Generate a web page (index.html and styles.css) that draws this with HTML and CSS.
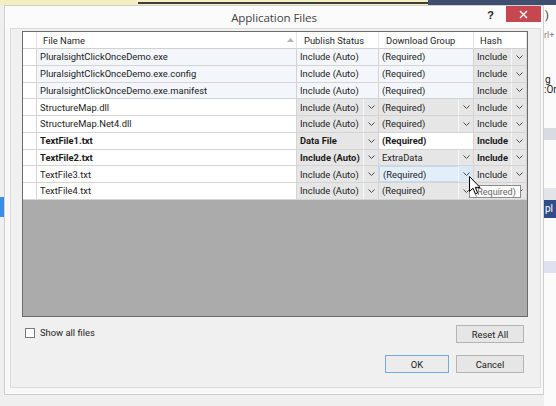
FILE: index.html
```html
<!DOCTYPE html>
<html>
<head>
<meta charset="utf-8">
<link rel="stylesheet" href="styles.css">
</head>
<body>
<div class="desk">
  <div class="topstrip">
    <div class="ts-yellow"><div class="ts-line"></div></div>
    <div class="ts-navy"></div>
  </div>
  <div class="leftblue"></div>
  <div class="bg-right">
    <span class="bgt bgt1">)</span>
    <span class="bgt bgt2">rl+</span>
    <span class="bgt bgt3">g</span>
    <span class="bgt bgt4">:On</span>
    <div class="band band1"></div>
    <div class="band band2"></div>
    <div class="band band3"><span>pl</span></div>
    <div class="band band4"></div>
  </div>

  <div class="dialog">
    <div class="titlebar">
      <div></div>
      <div class="title">Application Files</div>
      <div class="tb-right">
        <span class="help">?</span>
        <span class="close"><svg width="9" height="9" viewBox="0 0 9 9"><path d="M1 1 L8 8 M8 1 L1 8" stroke="#fff" stroke-width="1.4"/></svg></span>
      </div>
    </div>
    <div class="client">
      <div class="grid">
        <div class="rows">
          <!-- header -->
          <div class="c h"></div>
          <div class="c h hname"><span>File Name</span><svg class="sort" width="7" height="4" viewBox="0 0 7 4"><path d="M0 4 L3.5 0 L7 4 Z" fill="#b4b4b4"/></svg></div>
          <div class="c h hp">Publish Status</div>
          <div class="c h hp">Download Group</div>
          <div class="c h hp hh">Hash</div>

          <!-- row 1 -->
          <div class="c rh"></div>
          <div class="c t fn">PluralsightClickOnceDemo.exe</div>
          <div class="c t pl">Include (Auto)</div>
          <div class="c t pl">(Required)</div>
          <div class="c combo"><span class="v">Include</span><span class="dd"><svg width="7" height="4" viewBox="0 0 7 4"><path d="M0.5 0.5 L3.5 3.5 L6.5 0.5" fill="none" stroke="#4a4a4a"/></svg></span></div>

          <!-- row 2 -->
          <div class="c rh"></div>
          <div class="c t fn">PluralsightClickOnceDemo.exe.config</div>
          <div class="c t pl">Include (Auto)</div>
          <div class="c t pl">(Required)</div>
          <div class="c combo"><span class="v">Include</span><span class="dd"><svg width="7" height="4" viewBox="0 0 7 4"><path d="M0.5 0.5 L3.5 3.5 L6.5 0.5" fill="none" stroke="#4a4a4a"/></svg></span></div>

          <!-- row 3 -->
          <div class="c rh"></div>
          <div class="c t fn">PluralsightClickOnceDemo.exe.manifest</div>
          <div class="c t pl">Include (Auto)</div>
          <div class="c t pl">(Required)</div>
          <div class="c combo"><span class="v">Include</span><span class="dd"><svg width="7" height="4" viewBox="0 0 7 4"><path d="M0.5 0.5 L3.5 3.5 L6.5 0.5" fill="none" stroke="#4a4a4a"/></svg></span></div>

          <!-- row 4 -->
          <div class="c rh"></div>
          <div class="c fn">StructureMap.dll</div>
          <div class="c combo"><span class="v">Include (Auto)</span><span class="dd"><svg width="7" height="4" viewBox="0 0 7 4"><path d="M0.5 0.5 L3.5 3.5 L6.5 0.5" fill="none" stroke="#4a4a4a"/></svg></span></div>
          <div class="c combo"><span class="v">(Required)</span><span class="dd"><svg width="7" height="4" viewBox="0 0 7 4"><path d="M0.5 0.5 L3.5 3.5 L6.5 0.5" fill="none" stroke="#4a4a4a"/></svg></span></div>
          <div class="c combo"><span class="v">Include</span><span class="dd"><svg width="7" height="4" viewBox="0 0 7 4"><path d="M0.5 0.5 L3.5 3.5 L6.5 0.5" fill="none" stroke="#4a4a4a"/></svg></span></div>

          <!-- row 5 -->
          <div class="c rh"></div>
          <div class="c fn">StructureMap.Net4.dll</div>
          <div class="c combo"><span class="v">Include (Auto)</span><span class="dd"><svg width="7" height="4" viewBox="0 0 7 4"><path d="M0.5 0.5 L3.5 3.5 L6.5 0.5" fill="none" stroke="#4a4a4a"/></svg></span></div>
          <div class="c combo"><span class="v">(Required)</span><span class="dd"><svg width="7" height="4" viewBox="0 0 7 4"><path d="M0.5 0.5 L3.5 3.5 L6.5 0.5" fill="none" stroke="#4a4a4a"/></svg></span></div>
          <div class="c combo"><span class="v">Include</span><span class="dd"><svg width="7" height="4" viewBox="0 0 7 4"><path d="M0.5 0.5 L3.5 3.5 L6.5 0.5" fill="none" stroke="#4a4a4a"/></svg></span></div>

          <!-- row 6 -->
          <div class="c rh"></div>
          <div class="c fn b">TextFile1.txt</div>
          <div class="c combo b"><span class="v">Data File</span><span class="dd"><svg width="7" height="4" viewBox="0 0 7 4"><path d="M0.5 0.5 L3.5 3.5 L6.5 0.5" fill="none" stroke="#4a4a4a"/></svg></span></div>
          <div class="c pl b">(Required)</div>
          <div class="c combo b"><span class="v">Include</span><span class="dd"><svg width="7" height="4" viewBox="0 0 7 4"><path d="M0.5 0.5 L3.5 3.5 L6.5 0.5" fill="none" stroke="#4a4a4a"/></svg></span></div>

          <!-- row 7 -->
          <div class="c rh"></div>
          <div class="c fn b">TextFile2.txt</div>
          <div class="c combo b"><span class="v">Include (Auto)</span><span class="dd"><svg width="7" height="4" viewBox="0 0 7 4"><path d="M0.5 0.5 L3.5 3.5 L6.5 0.5" fill="none" stroke="#4a4a4a"/></svg></span></div>
          <div class="c combo"><span class="v">ExtraData</span><span class="dd"><svg width="7" height="4" viewBox="0 0 7 4"><path d="M0.5 0.5 L3.5 3.5 L6.5 0.5" fill="none" stroke="#4a4a4a"/></svg></span></div>
          <div class="c combo b"><span class="v">Include</span><span class="dd"><svg width="7" height="4" viewBox="0 0 7 4"><path d="M0.5 0.5 L3.5 3.5 L6.5 0.5" fill="none" stroke="#4a4a4a"/></svg></span></div>

          <!-- row 8 -->
          <div class="c rh"></div>
          <div class="c fn">TextFile3.txt</div>
          <div class="c combo"><span class="v">Include (Auto)</span><span class="dd"><svg width="7" height="4" viewBox="0 0 7 4"><path d="M0.5 0.5 L3.5 3.5 L6.5 0.5" fill="none" stroke="#4a4a4a"/></svg></span></div>
          <div class="c combo hov"><span class="v">(Required)</span><span class="dd"><svg width="7" height="4" viewBox="0 0 7 4"><path d="M0.5 0.5 L3.5 3.5 L6.5 0.5" fill="none" stroke="#4a4a4a"/></svg></span></div>
          <div class="c combo"><span class="v">Include</span><span class="dd"><svg width="7" height="4" viewBox="0 0 7 4"><path d="M0.5 0.5 L3.5 3.5 L6.5 0.5" fill="none" stroke="#4a4a4a"/></svg></span></div>

          <!-- row 9 -->
          <div class="c rh"></div>
          <div class="c fn">TextFile4.txt</div>
          <div class="c combo"><span class="v">Include (Auto)</span><span class="dd"><svg width="7" height="4" viewBox="0 0 7 4"><path d="M0.5 0.5 L3.5 3.5 L6.5 0.5" fill="none" stroke="#4a4a4a"/></svg></span></div>
          <div class="c combo"><span class="v">(Required)</span><span class="dd"><svg width="7" height="4" viewBox="0 0 7 4"><path d="M0.5 0.5 L3.5 3.5 L6.5 0.5" fill="none" stroke="#4a4a4a"/></svg></span></div>
          <div class="c combo"><span class="v">Include</span><span class="dd"><svg width="7" height="4" viewBox="0 0 7 4"><path d="M0.5 0.5 L3.5 3.5 L6.5 0.5" fill="none" stroke="#4a4a4a"/></svg></span></div>
        </div>
      </div>

      <div class="opts">
        <label class="chk"><span class="box"></span><span>Show all files</span></label>
        <button class="btn">Reset All</button>
      </div>
      <div class="btns">
        <button class="btn ok">OK</button>
        <button class="btn">Cancel</button>
      </div>
    </div>
  </div>

  <div class="tooltip">(Required)</div>
  <svg class="cursor" width="12" height="19" viewBox="0 0 12 19"><path d="M0.5 0.5 L0.5 15.5 L4 12.2 L6.4 17.8 L8.6 16.9 L6.3 11.4 L11 11.4 Z" fill="#fff" stroke="#000" stroke-width="1" stroke-linejoin="round"/></svg>
</div>
</body>
</html>
```

FILE: styles.css
```css
* { box-sizing: border-box; }
html, body { margin: 0; padding: 0; }
body {
  width: 556px;
  height: 406px;
  overflow: hidden;
  background: #ececec;
  font-family: Roboto, "Liberation Sans", sans-serif;
  font-size: 9.4px;
  color: #1b1b1b;
}
.desk { position: relative; width: 556px; height: 406px; overflow: hidden; background: #efefef; }

.topstrip { display: flex; height: 5px; }
.ts-yellow { width: 428px; background: #f4efc1; position: relative; }
.ts-line { position: absolute; left: 138px; right: 0; top: 2px; height: 2px; background: #3e3e3e; }
.ts-navy { flex: 1; background: #3f4d6e; }

.leftblue { position: absolute; left: 0; top: 197px; width: 4px; height: 20px; background: #3a8de6; }

.bg-right { position: absolute; left: 544px; top: 5px; width: 12px; height: 401px; background: #fbfbfb; }
.bgt { position: absolute; font-size: 9px; color: #333; white-space: nowrap; }
.bgt1 { left: 1px; top: 4px; font-size: 11px; }
.bgt2 { left: 0; top: 25px; color: #888; }
.bgt3 { left: 1px; top: 69px; font-size: 10px; color: #222; }
.bgt4 { left: 0; top: 79px; font-size: 10px; color: #222; }
.band { position: absolute; left: 0; width: 12px; }
.band1 { top: 123px; height: 12px; background: #d9dbe3; }
.band2 { top: 183px; height: 12px; background: #e2e4ea; }
.band3 { top: 195px; height: 18px; background: #2f4d86; }
.band3 span { position: absolute; left: 1px; top: 3px; color: #fff; font-size: 10px; }
.band4 { top: 256px; height: 12px; background: #dfe1f0; }

.dialog {
  position: absolute;
  left: 4px; top: 5px;
  width: 540px; height: 390px;
  border: 1px solid #cfcfcf;
  background: #f8f8f8;
  display: flex;
  flex-direction: column;
}
.titlebar {
  height: 22px;
  display: grid;
  grid-template-columns: 1fr auto 1fr;
  align-items: start;
  background: #fbfbfb;
}
.title {
  font-family: "Open Sans", "Noto Sans", sans-serif;
  font-size: 11.6px;
  color: #444;
  padding-top: 4px;
  letter-spacing: -0.1px;
}
.tb-right { display: flex; justify-content: flex-end; align-items: flex-start; }
.help { font-weight: bold; font-size: 11px; color: #222; margin-top: 3px; margin-right: 12px; font-family: "Liberation Sans", sans-serif; }
.close {
  width: 35px; height: 16px;
  background: #c5474f;
  display: flex; align-items: center; justify-content: center;
  margin-right: 2px;
}

.client {
  flex: 1;
  margin: 0 2px 6px 5px;
  border: 1px solid #dcdcdc;
  background: #f0f0f0;
  padding: 2px 12px 0 11px;
  display: flex;
  flex-direction: column;
}

.grid {
  width: 506px;
  height: 286px;
  border: 1px solid #6b6b6b;
  background: #ababab;
}
.rows {
  display: grid;
  grid-template-columns: 14px 260px 82px 95px 53px;
  grid-template-rows: 17px repeat(9, 16.75px);
  background: #fff;
}
.c {
  border-right: 1px solid #d4d4d4;
  border-bottom: 1px solid #d4d4d4;
  white-space: nowrap;
  overflow: hidden;
  display: flex;
  align-items: center;
  background: #fff;
}
.h { background: #fff; color: #1e1e1e; border-right-color: #e4e4e4; border-bottom-color: #d0d0d0; }
.hname { padding-left: 6px; position: relative; }
.hname span { flex: 1; }
.sort { margin-right: 2px; margin-top: -1px; }
.hp { padding-left: 7px; }
.hh { padding-left: 6px; }
.rh { background: #fff; }
.fn { padding-left: 3px; }
.t { background: #f3f6fb; }
.pl { padding-left: 3px; }
.b { font-weight: bold; }

.combo { background: #e6e6e6; padding: 0; align-items: stretch; }
.combo .v { flex: 1; padding-left: 3px; display: flex; align-items: center; border-right: 1px solid #f7f7f7; }
.combo .dd { width: 14px; display: flex; align-items: center; justify-content: center; }
.combo.hov { background: #e3eefb; }
.combo.hov .v { border: 1px solid #c5daf1; border-right-color: #f2f7fd; }
.combo.hov .dd { background: #dde8f5; }

.opts {
  margin-top: 8px;
  display: flex;
  justify-content: space-between;
  align-items: flex-start;
  padding: 0 4px 0 3px;
}
.chk { display: flex; align-items: center; gap: 5px; margin-top: 2px; color: #222; }
.box { width: 10px; height: 10px; border: 1px solid #7a7a7a; background: #fff; }

.btn {
  font-family: Roboto, "Liberation Sans", sans-serif;
  font-size: 9.4px;
  color: #1b1b1b;
  width: 68px; height: 18px;
  border: 1px solid #b4b4b4;
  background: #e6e6e6;
  padding: 0;
}
.btns {
  margin-top: 12px;
  display: flex;
  justify-content: flex-end;
  gap: 7px;
  padding-right: 4px;
}
.ok { width: 64px; border-color: #78a9d9; background: #ececec; }

.tooltip {
  position: absolute;
  left: 469px; top: 185px;
  width: 52px; height: 13px;
  border: 1px solid #8a8a8a;
  background: #fdfdfd;
  color: #666;
  font-size: 9px;
  display: flex; align-items: center; justify-content: center;
}
.cursor { position: absolute; left: 469px; top: 176px; }
```
